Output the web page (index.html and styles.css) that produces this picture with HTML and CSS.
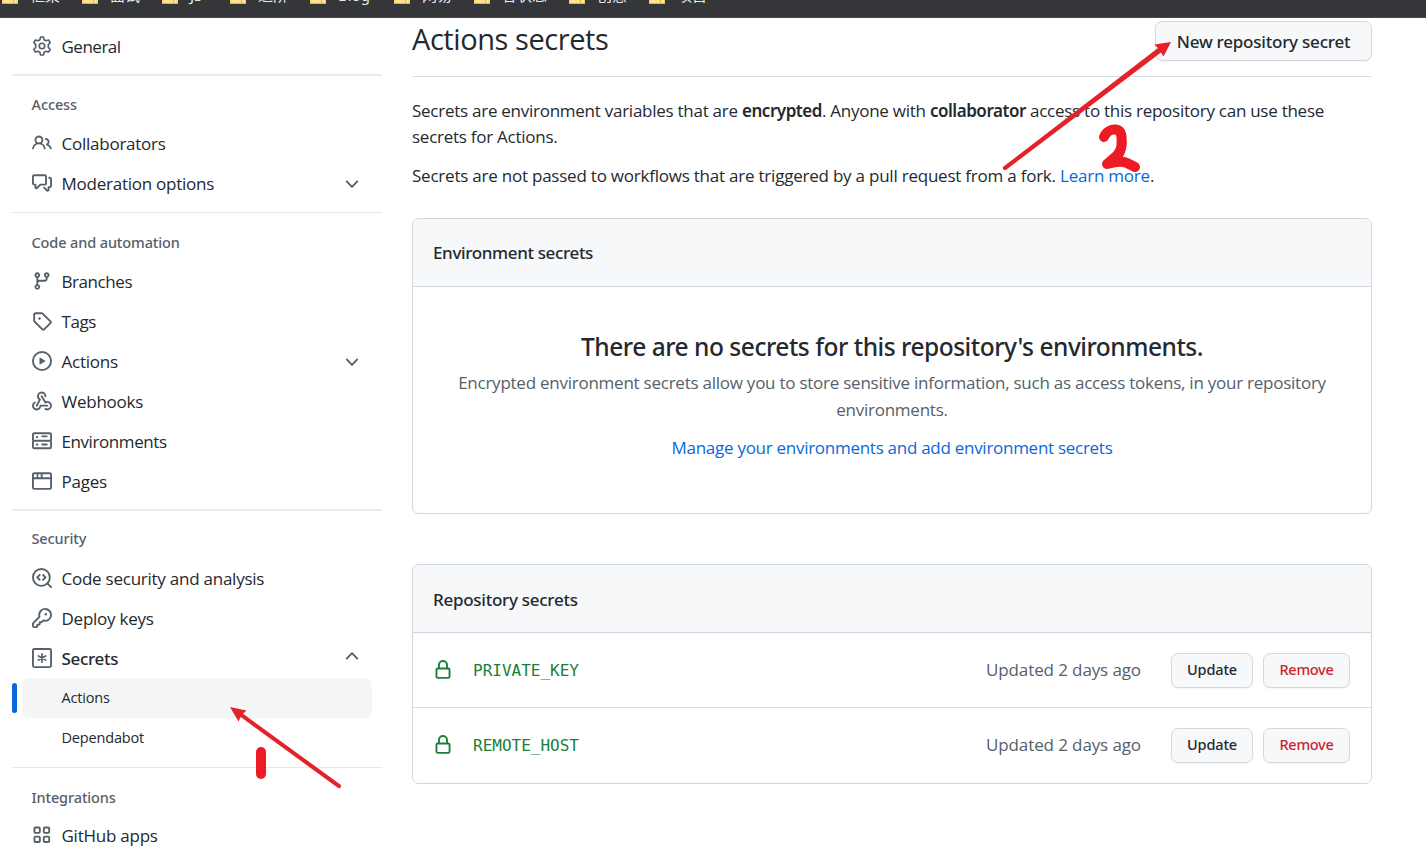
FILE: index.html
```html
<!DOCTYPE html>
<html lang="en">
<head>
<meta charset="utf-8">
<title>Actions secrets</title>
<link rel="stylesheet" href="styles.css">
</head>
<body>
<svg class="defs" width="0" height="0">
  <symbol id="folder" viewBox="0 0 16 14"><path fill="#f5cf5b" d="M0 0h6l2 3h8v11H0z"/><path fill="#ffe28a" d="M1 4h14v9H1z"/><path fill="#e3b53d" d="M11 4h1v9h-1zM0 13h16v1H0z"/></symbol>
  <symbol id="chevron" viewBox="0 0 16 16"><path d="M12.780 6.220a.75.75 0 010 1.060l-4.250 4.250a.75.75 0 01-1.060 0L3.220 7.280a.75.75 0 011.060-1.060L8 9.940l3.720-3.720a.75.75 0 011.060 0z"/></symbol>
  <symbol id="lock" viewBox="0 0 16 16"><path fill-rule="evenodd" d="M4 4v2h-.25A1.750 1.750 0 002 7.750v5.500c0 .966.784 1.750 1.750 1.750h8.500A1.750 1.750 0 0014 13.250v-5.500A1.750 1.750 0 0012.250 6H12V4a4 4 0 10-8 0zm6.500 2V4a2.500 2.500 0 10-5 0v2h5zM12 7.500h.25a.25.25 0 01.25.25v5.500a.25.25 0 01-.25.25h-8.500a.25.25 0 01-.25-.25v-5.500a.25.25 0 01.25-.25H12z"/></symbol>
</svg>

<div class="bookmarks">
  <span class="bm w80"><svg><use href="#folder"/></svg>框架</span>
  <span class="bm w80"><svg><use href="#folder"/></svg>面试</span>
  <span class="bm w68"><svg><use href="#folder"/></svg>JS</span>
  <span class="bm w80"><svg><use href="#folder"/></svg>进阶</span>
  <span class="bm w84"><svg><use href="#folder"/></svg>Blog</span>
  <span class="bm w80"><svg><use href="#folder"/></svg>网易</span>
  <span class="bm w95"><svg><use href="#folder"/></svg>各状态</span>
  <span class="bm w80"><svg><use href="#folder"/></svg>创意</span>
  <span class="bm w80"><svg><use href="#folder"/></svg>项目</span>
</div>

<div class="layout">
  <nav class="sidebar">
    <ul class="group">
      <li class="item"><svg class="icon" viewBox="0 0 24 24"><g fill="none" stroke="currentColor" stroke-width="2" stroke-linejoin="round"><circle cx="12" cy="12" r="3.300"/><path d="M10.300 1.200h3.400l.8 3.200 2.200 1.300 3.200-.9 1.900 3-2.200 2.500v3.400l2.200 2.500-1.900 3-3.200-.9-2.200 1.300-.8 3.200h-3.400l-.8-3.200-2.200-1.300-3.200.9-1.900-3 2.200-2.500v-3.400L2.200 7.800l1.900-3 3.200.9 2.200-1.300z"/></g></svg><span class="tight">General</span></li>
    </ul>
    <h3 class="heading thick">Access</h3>
    <ul class="group">
      <li class="item"><svg class="icon" viewBox="0 0 16 16"><path fill-rule="evenodd" d="M5.500 3.500a2 2 0 100 4 2 2 0 000-4zM2 5.500a3.500 3.500 0 115.898 2.549 5.507 5.507 0 013.034 4.084.75.75 0 11-1.482.235 4.001 4.001 0 00-7.900 0 .75.75 0 01-1.482-.236A5.507 5.507 0 013.102 8.050 3.490 3.490 0 012 5.500zM11 4a.75.75 0 100 1.500 1.500 1.500 0 01.666 2.844.75.75 0 00-.416.672v.352a.75.75 0 00.574.730c1.200.289 2.162 1.200 2.522 2.372a.75.75 0 101.434-.440 5.010 5.010 0 00-2.560-3.012A3 3 0 0011 4z"/></svg><span>Collaborators</span></li>
      <li class="item"><svg class="icon" viewBox="0 0 16 16"><path fill-rule="evenodd" d="M1.500 2.750a.25.25 0 01.25-.25h8.500a.25.25 0 01.25.25v5.500a.25.25 0 01-.25.25h-3.500a.75.75 0 00-.530.220L3.500 11.440V9.250a.75.75 0 00-.75-.75h-1a.25.25 0 01-.25-.25v-5.500zM1.750 1A1.750 1.750 0 000 2.750v5.500C0 9.216.784 10 1.750 10H2v1.543a1.457 1.457 0 002.487 1.030L7.061 10h3.189A1.750 1.750 0 0012 8.250v-5.500A1.750 1.750 0 0010.250 1h-8.500zM14.500 4.750a.25.25 0 00-.25-.25h-.5a.75.75 0 110-1.500h.5c.966 0 1.750.784 1.750 1.750v5.500A1.750 1.750 0 0114.250 12H14v1.543a1.457 1.457 0 01-2.487 1.030L9.220 12.280a.75.75 0 111.060-1.060l2.220 2.220v-2.190a.75.75 0 01.75-.75h1a.25.25 0 00.25-.25v-5.500z"/></svg><span>Moderation options</span><svg class="chev"><use href="#chevron"/></svg></li>
    </ul>
    <h3 class="heading">Code and automation</h3>
    <ul class="group">
      <li class="item"><svg class="icon" viewBox="0 0 16 16"><path fill-rule="evenodd" d="M11.750 2.500a.75.75 0 100 1.500.75.75 0 000-1.500zm-2.250.75a2.250 2.250 0 113 2.122V6A2.500 2.500 0 0110 8.500H6a1 1 0 00-1 1v1.128a2.251 2.251 0 11-1.500 0V5.372a2.250 2.250 0 111.500 0v1.836A2.492 2.492 0 016 7h4a1 1 0 001-1v-.628A2.250 2.250 0 019.500 3.250zM4.250 12a.75.75 0 100 1.500.75.75 0 000-1.500zM3.500 3.250a.75.75 0 111.500 0 .75.75 0 01-1.500 0z"/></svg><span class="snug">Branches</span></li>
      <li class="item"><svg class="icon" viewBox="0 0 16 16"><path fill-rule="evenodd" d="M2.500 7.775V2.750a.25.25 0 01.25-.25h5.025a.25.25 0 01.177.073l6.250 6.250a.25.25 0 010 .354l-5.025 5.025a.25.25 0 01-.354 0l-6.250-6.250a.25.25 0 01-.073-.177zm-1.500 0V2.750C1 1.784 1.784 1 2.750 1h5.025c.464 0 .910.184 1.238.513l6.250 6.250a1.750 1.750 0 010 2.474l-5.026 5.026a1.750 1.750 0 01-2.474 0l-6.250-6.250A1.750 1.750 0 011 7.775zM6 5a1 1 0 100 2 1 1 0 000-2z"/></svg><span class="snug">Tags</span></li>
      <li class="item"><svg class="icon" viewBox="0 0 16 16"><path fill-rule="evenodd" d="M1.500 8a6.500 6.500 0 1113 0 6.500 6.500 0 01-13 0zM8 0a8 8 0 100 16A8 8 0 008 0zM6.379 5.227A.25.25 0 006 5.442v5.117a.25.25 0 00.379.214l4.264-2.559a.25.25 0 000-.428L6.379 5.227z"/></svg><span>Actions</span><svg class="chev"><use href="#chevron"/></svg></li>
      <li class="item"><svg class="icon" viewBox="0 0 16 16"><path fill-rule="evenodd" d="M5.500 4.250a2.250 2.250 0 014.500 0 .75.75 0 001.500 0 3.750 3.750 0 10-6.140 2.889l-2.272 4.258a.75.75 0 001.324.706L7 7.250a.75.75 0 00-.309-1.015A2.250 2.250 0 015.500 4.250z"/><path d="M7.364 3.607a.75.75 0 011.030.257l2.608 4.349a3.750 3.750 0 11-.628 6.785.75.75 0 01.752-1.299 2.250 2.250 0 10-.033-3.880.75.75 0 01-1.030-.256L7.107 4.636a.75.75 0 01.257-1.030z"/><path d="M2.900 8.776A.75.75 0 012.625 9.800 2.250 2.250 0 106 11.750a.75.75 0 01.75-.751h5.500a.75.75 0 010 1.500H7.425a3.751 3.751 0 11-5.550-3.998.75.75 0 011.024.274z"/></svg><span>Webhooks</span></li>
      <li class="item"><svg class="icon" viewBox="0 0 16 16"><path fill-rule="evenodd" d="M1.750 1A1.750 1.750 0 000 2.750v4c0 .372.116.717.314 1a1.742 1.742 0 00-.314 1v4c0 .966.784 1.750 1.750 1.750h12.500A1.750 1.750 0 0016 12.750v-4c0-.372-.116-.717-.314-1 .198-.283.314-.628.314-1v-4A1.750 1.750 0 0014.250 1H1.750zm0 7.500a.25.25 0 00-.25.25v4c0 .138.112.25.25.25h12.500a.25.25 0 00.25-.25v-4a.25.25 0 00-.25-.25H1.750zM14.500 6.750a.25.25 0 01-.25.25H1.750a.25.25 0 01-.25-.25v-4a.25.25 0 01.25-.25h12.500a.25.25 0 01.25.25v4zm-7-2.500A.75.75 0 018.250 3.500h3.500a.75.75 0 010 1.500h-3.500a.75.75 0 01-.75-.75zm.75 5.750a.75.75 0 000 1.500h3.500a.75.75 0 000-1.500h-3.500zM3 4.750A.75.75 0 013.750 4h.5a.75.75 0 010 1.500h-.5A.75.75 0 013 4.750zm.75 5.250a.75.75 0 000 1.500h.5a.75.75 0 000-1.500h-.5z"/></svg><span class="snug">Environments</span></li>
      <li class="item"><svg class="icon" viewBox="0 0 16 16"><path fill-rule="evenodd" d="M0 2.750C0 1.784.784 1 1.750 1h12.500c.966 0 1.750.784 1.750 1.750v10.500A1.750 1.750 0 0114.250 15H1.750A1.750 1.750 0 010 13.250V2.750zm1.750-.25a.25.25 0 00-.25.25V5h2.250V2.500h-2zm3.250 0V5h2V2.500H5zm3.500 0V5h6V2.750a.25.25 0 00-.25-.25H8.500zm6 4h-13v6.750c0 .138.112.25.25.25h12.500a.25.25 0 00.25-.25V6.500z"/></svg><span>Pages</span></li>
    </ul>
    <h3 class="heading thick security">Security</h3>
    <ul class="group">
      <li class="item"><svg class="icon" viewBox="0 0 16 16"><g fill="none" stroke="currentColor" stroke-width="1.500" stroke-linecap="round" stroke-linejoin="round"><circle cx="7.500" cy="7.500" r="6.750"/><path d="M12.300 12.300l2.950 2.950M6.100 5.600L4.200 7.500l1.900 1.900M8.900 5.600l1.900 1.900-1.900 1.900"/></g></svg><span>Code security and analysis</span></li>
      <li class="item"><svg class="icon" viewBox="0 0 16 16"><path fill-rule="evenodd" d="M6.500 5.500a4 4 0 112.731 3.795.75.75 0 00-.768.180L7.440 10.500H6.250a.75.75 0 00-.75.75v1.190l-.060.060H4.250a.75.75 0 00-.75.75v1.190l-.060.060H1.750a.25.25 0 01-.25-.25v-1.690l5.024-5.023a.75.75 0 00.181-.768A3.995 3.995 0 016.500 5.500zm4-5.500a5.500 5.500 0 00-5.348 6.788L.22 11.720a.75.75 0 00-.22.530v2C0 15.216.784 16 1.750 16h2a.75.75 0 00.530-.22l.5-.5a.75.75 0 00.22-.530V14h.75a.75.75 0 00.530-.22l.5-.5a.75.75 0 00.22-.530V12h.75a.75.75 0 00.530-.22l.932-.932A5.500 5.500 0 1010.500 0zm.5 6a1 1 0 100-2 1 1 0 000 2z"/></svg><span>Deploy keys</span></li>
      <li class="item current"><svg class="icon" viewBox="0 0 16 16"><g fill="none" stroke="currentColor" stroke-width="1.500" stroke-linecap="round"><rect x=".75" y=".75" width="14.500" height="14.500" rx="1.200"/><path stroke-width="1.350" d="M8 4.700v6.600M5.150 6.350l5.700 3.300M10.850 6.350l-5.700 3.300"/></g></svg><span>Secrets</span><svg class="chev up"><use href="#chevron"/></svg></li>
      <li class="sub selected"><span>Actions</span></li>
      <li class="sub"><span>Dependabot</span></li>
    </ul>
    <h3 class="heading integrations">Integrations</h3>
    <ul class="group">
      <li class="item"><svg class="icon" viewBox="0 0 16 16"><g fill="none" stroke="currentColor" stroke-width="1.500"><rect x="1.950" y="1.950" width="4.300" height="4.300" rx=".8"/><rect x="9.450" y="1.950" width="4.300" height="4.300" rx=".8"/><rect x="1.950" y="9.250" width="4.300" height="4.300" rx=".8"/><rect x="9.450" y="9.250" width="4.300" height="4.300" rx=".8"/></g></svg><span>GitHub apps</span></li>
    </ul>
  </nav>

  <main class="content">
    <header class="subhead"><h2>Actions secrets</h2><button class="btn btn-lg">New repository secret</button></header>
    <p class="intro">Secrets are environment variables that are <b>encrypted</b>. Anyone with <b>collaborator</b> access to this repository can use these<br>secrets for Actions.</p>
    <p class="intro second">Secrets are not passed to workflows that are triggered by a pull request from a fork. <a>Learn more</a>.</p>

    <section class="box env">
      <h3 class="box-head">Environment secrets</h3>
      <div class="blank">
        <h4>There are no secrets for this repository's environments.</h4>
        <p class="desc">Encrypted environment secrets allow you to store sensitive information, such as access tokens, in your repository<br>environments.</p>
        <a class="manage">Manage your environments and add environment secrets</a>
      </div>
    </section>

    <section class="box repo">
      <h3 class="box-head">Repository secrets</h3>
      <div class="row"><svg class="lock"><use href="#lock"/></svg><code>PRIVATE_KEY</code><span class="updated">Updated 2 days ago</span><button class="btn">Update</button><button class="btn danger">Remove</button></div>
      <div class="row"><svg class="lock"><use href="#lock"/></svg><code>REMOTE_HOST</code><span class="updated">Updated 2 days ago</span><button class="btn">Update</button><button class="btn danger">Remove</button></div>
    </section>
  </main>
</div>

<svg class="marks" viewBox="0 0 1426 847">
  <g fill="#e3222a">
    <path d="M230 707L246.500 710.500L243 713.800L340 784.300A2 2 0 0 1 337.800 787.800L240.700 717L238.500 721.500Z"/>
    <path d="M1171 42L1163.500 56.500L1161 52.500L1006.500 169.500A2 2 0 0 1 1003.500 166.500L1158 48L1154.500 44.500Z"/>
  </g>
  <g fill="none" stroke="#ed1c24" stroke-width="10" stroke-linecap="round" stroke-linejoin="round">
    <path d="M261 752V774"/>
    <path d="M1104 137C1106 132 1111 129 1116 129.500C1122 130.500 1122 137 1121.500 145C1121 154 1114 158 1107 164C1114 162 1121 160 1127 163L1135 167"/>
    <path stroke-width="8" d="M1120 134C1124 140 1123 150 1118 157"/>
  </g>
</svg>
</body>
</html>
```
FILE: styles.css
```css
* { box-sizing: border-box; }
body { margin: 0; height: 847px; overflow: hidden; position: relative; background: #fff; color: #24292f; font: 400 17px/26px "Open Sans", sans-serif; letter-spacing: -.245px; }
h2, h3, h4, p, ul { margin: 0; padding: 0; font-weight: 400; }
ul { list-style: none; }
svg { fill: currentColor; flex: none; }
.defs { position: absolute; }
a { color: #0969da; }

.bookmarks { height: 18px; background: #35363a; border-bottom: 1px solid #4a4b4e; display: flex; overflow: hidden; padding-left: 2px; color: #e8eaed; font: 400 15px/18px "Noto Sans", "Noto Sans CJK SC", sans-serif; letter-spacing: 0; }
.bm { display: flex; height: 18px; margin-top: -14px; gap: 12px; flex: none; white-space: nowrap; }
.bm svg { width: 16px; height: 14px; margin-top: 4px; }
.w68 { width: 68px; }
.w80 { width: 80px; }
.w84 { width: 84px; }
.w95 { width: 95px; }

.layout { display: flex; }
.sidebar { width: 370px; margin-left: 12px; padding-top: 8px; color: #24292f; }
.item { height: 40px; display: flex; align-items: center; padding: 0 20px 0 19.500px; }
.item .icon { width: 20px; height: 20px; margin-right: 10px; color: #57606a; position: relative; top: -.5px; }
.item span { flex: 1; position: relative; top: .5px; }
.item .tight { letter-spacing: -.5px; }
.item .snug { letter-spacing: -.42px; }
.chev { width: 20px; height: 20px; color: #57606a; position: relative; top: -1px; }
.chev.up { transform: rotate(180deg); }
.current { font-family: "Noto Sans", sans-serif; font-weight: 500; letter-spacing: -.3px; }
.heading { margin-top: 8px; height: 50px; border-top: 1px solid #e6e9ec; padding: 9px 20px 0 19.500px; font: 500 14.5px/40px "Noto Sans", sans-serif; letter-spacing: -.12px; color: #57606a; }
.heading.thick { border-top: 2px solid #e9ebec; padding-top: 8px; height: 49.500px; }
.heading.security { margin-top: 7px; padding-top: 7.500px; }
.heading.integrations { margin-top: 9px; height: 48.500px; }
.sub { height: 40px; line-height: 40px; margin: 0 10px; padding-left: 39.500px; font-size: 14.5px; letter-spacing: -.17px; border-radius: 7px; position: relative; }
.selected { background: #f4f5f7; }
.selected::before { content: ""; position: absolute; left: -10px; top: 5px; width: 5px; height: 30px; border-radius: 3px; background: #0969da; }

.content { width: 960px; margin-left: 30px; }
.subhead { height: 59px; border-bottom: 1px solid #d8dee4; display: flex; justify-content: space-between; align-items: flex-start; padding-top: 3px; }
.subhead h2 { font-size: 29px; line-height: 40px; letter-spacing: -.43px; margin-top: -2px; }
.btn { height: 35px; padding: 0 0 2px; width: 82px; border: 1px solid #d5d8dc; border-radius: 7px; background: #f6f8fa; color: #24292f; font: 500 14.5px/20px "Noto Sans", sans-serif; letter-spacing: -.15px; box-shadow: 0 1px 0 rgba(27,31,36,.04); }
.btn-lg { width: 217px; height: 40px; padding: 1px 0 0; font-size: 17px; letter-spacing: -.22px; }
.danger { width: 87px; margin-left: 10px; color: #cf222e; letter-spacing: -.28px; }
.intro { margin-top: 21px; line-height: 26.250px; white-space: nowrap; }
.intro b { font-family: "Noto Sans", sans-serif; font-weight: 600; letter-spacing: -.46px; }
.intro:not(.second) { letter-spacing: -.26px; }
.intro.second { margin-top: 12.500px; letter-spacing: -.225px; }
.box { border: 1px solid #d0d7de; border-radius: 7px; overflow: hidden; }
.env { margin: 29px 0 50px; height: 296px; }
.box-head { height: 68px; padding-left: 20px; background: #f6f8fa; border-bottom: 1px solid #d0d7de; font: 500 17px/68px "Noto Sans", sans-serif; letter-spacing: -.36px; }
.repo .box-head { line-height: 70px; letter-spacing: -.27px; }
.blank { padding-top: 40px; text-align: center; }
.blank h4 { font: 500 24.500px/40px "Noto Sans", sans-serif; letter-spacing: -.474px; }
.desc { color: #57606a; line-height: 27px; margin-top: 2px; white-space: nowrap; }
.manage { display: block; margin-top: 12px; letter-spacing: -.276px; }
.row { height: 74px; display: flex; align-items: center; padding: 0 21px 0 20px; }
.row + .row { border-top: 1px solid #d8dee4; height: 76px; }
.row + .row { padding-bottom: 1px; }
.lock { width: 20px; height: 20px; color: #1a7f37; margin-right: 20px; }
.row code { flex: 1; color: #1a7f37; font: 16px/20px "DejaVu Sans Mono", monospace; letter-spacing: 0; position: relative; top: 1px; }
.updated { color: #57606a; letter-spacing: -.11px; margin-right: 30px; }
.marks { position: absolute; left: 0; top: 0; width: 1426px; height: 847px; pointer-events: none; }
```
